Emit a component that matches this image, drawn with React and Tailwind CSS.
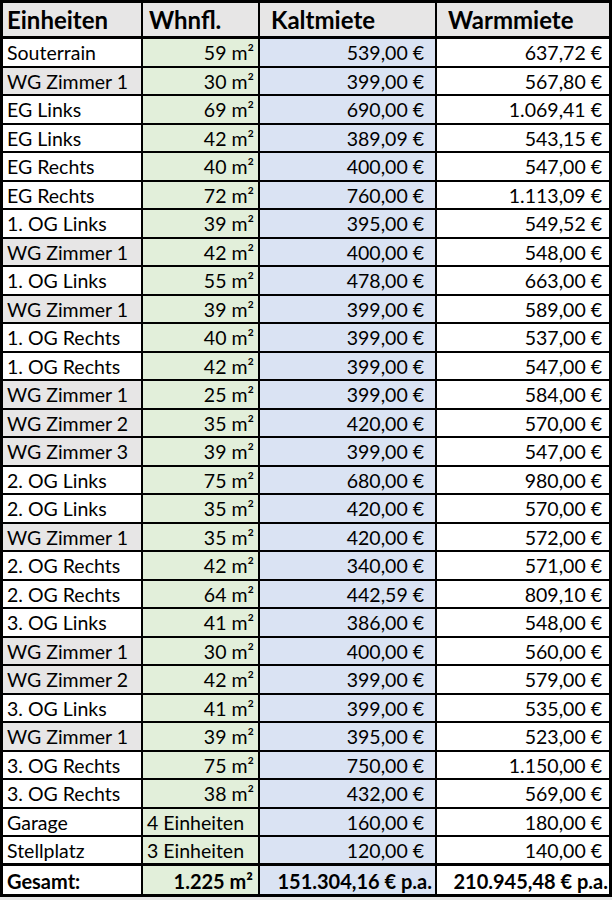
import React from "react";

const rows = [
  ["Souterrain", "59 m²", "539,00 €", "637,72 €", false],
  ["WG Zimmer 1", "30 m²", "399,00 €", "567,80 €", true],
  ["EG Links", "69 m²", "690,00 €", "1.069,41 €", false],
  ["EG Links", "42 m²", "389,09 €", "543,15 €", false],
  ["EG Rechts", "40 m²", "400,00 €", "547,00 €", false],
  ["EG Rechts", "72 m²", "760,00 €", "1.113,09 €", false],
  ["1. OG Links", "39 m²", "395,00 €", "549,52 €", false],
  ["WG Zimmer 1", "42 m²", "400,00 €", "548,00 €", true],
  ["1. OG Links", "55 m²", "478,00 €", "663,00 €", false],
  ["WG Zimmer 1", "39 m²", "399,00 €", "589,00 €", true],
  ["1. OG Rechts", "40 m²", "399,00 €", "537,00 €", false],
  ["1. OG Rechts", "42 m²", "399,00 €", "547,00 €", false],
  ["WG Zimmer 1", "25 m²", "399,00 €", "584,00 €", true],
  ["WG Zimmer 2", "35 m²", "420,00 €", "570,00 €", true],
  ["WG Zimmer 3", "39 m²", "399,00 €", "547,00 €", true],
  ["2. OG Links", "75 m²", "680,00 €", "980,00 €", false],
  ["2. OG Links", "35 m²", "420,00 €", "570,00 €", false],
  ["WG Zimmer 1", "35 m²", "420,00 €", "572,00 €", true],
  ["2. OG Rechts", "42 m²", "340,00 €", "571,00 €", false],
  ["2. OG Rechts", "64 m²", "442,59 €", "809,10 €", false],
  ["3. OG Links", "41 m²", "386,00 €", "548,00 €", false],
  ["WG Zimmer 1", "30 m²", "400,00 €", "560,00 €", true],
  ["WG Zimmer 2", "42 m²", "399,00 €", "579,00 €", true],
  ["3. OG Links", "41 m²", "399,00 €", "535,00 €", false],
  ["WG Zimmer 1", "39 m²", "395,00 €", "523,00 €", true],
  ["3. OG Rechts", "75 m²", "750,00 €", "1.150,00 €", false],
  ["3. OG Rechts", "38 m²", "432,00 €", "569,00 €", false],
  ["Garage", "4 Einheiten", "160,00 €", "180,00 €", false, true],
  ["Stellplatz", "3 Einheiten", "120,00 €", "140,00 €", false, true],
];

export default function App() {
  return (
    <div
      className="w-[616px] bg-white text-black"
      style={{ fontFamily: "Lato, 'Open Sans', sans-serif" }}
    >
      <div className="w-[612px] border-[3px] border-black">
        <div className="flex h-[36px] border-b-[3px] border-black bg-[#e7e6e6] text-[24px] font-bold leading-none">
          <div className="flex w-[140px] items-center border-r-2 border-black pl-[4px]">Einheiten</div>
          <div className="flex w-[117px] items-center border-r-2 border-black pl-[6px]">Whnfl.</div>
          <div className="flex w-[177px] items-center border-r-2 border-black pl-[11px]">Kaltmiete</div>
          <div className="flex w-[172px] items-center pl-[11px]">Warmmiete</div>
        </div>
        {rows.map((r, i) => {
          const last = i === rows.length - 1;
          return (
            <div
              key={i}
              className={
                "flex text-[19.5px] leading-none border-black " +
                (last ? "h-[29px] border-b-[3px]" : "h-[28.5px] border-b-2")
              }
            >
              <div
                className={
                  "flex w-[140px] items-center border-r-2 border-black pl-[4px] pt-[1px] " +
                  (r[4] ? "bg-[#e7e6e6]" : "bg-white")
                }
              >
                {r[0]}
              </div>
              <div
                className={
                  "flex w-[117px] items-center border-r-2 border-black bg-[#e2efda] pt-[1px] " +
                  (r[5] ? "justify-start pl-[4px]" : "justify-end pr-[4px]")
                }
              >
                {r[1]}
              </div>
              <div className="flex w-[177px] items-center justify-end border-r-2 border-black bg-[#dae3f3] pr-[11px] pt-[1px]">
                {r[2]}
              </div>
              <div className="flex w-[172px] items-center justify-end bg-white pr-[7px] pt-[1px]">
                {r[3]}
              </div>
            </div>
          );
        })}
        <div className="flex h-[28px] text-[20px] font-bold leading-none">
          <div className="flex w-[140px] items-center border-r-2 border-black bg-white pl-[4px] pt-[1px]">Gesamt:</div>
          <div className="flex w-[117px] items-center justify-end border-r-2 border-black bg-[#e2efda] pr-[5px] pt-[1px]">1.225 m²</div>
          <div className="flex w-[177px] items-center justify-end border-r-2 border-black bg-[#dae3f3] pr-[3px] pt-[1px]">151.304,16 € p.a.</div>
          <div className="flex w-[172px] items-center justify-end bg-white pr-[1px] pt-[1px]">210.945,48 € p.a.</div>
        </div>
      </div>
      <div className="h-[3px] w-[612px] bg-[#e6e6e6]" />
    </div>
  );
}
